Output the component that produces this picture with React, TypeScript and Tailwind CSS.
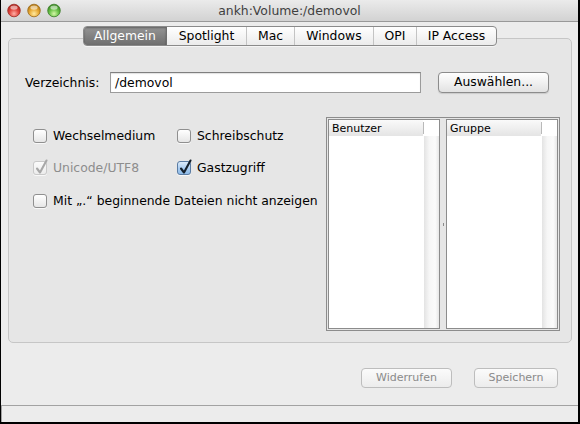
import React from "react";

const tabs = [
  { label: "Allgemein", w: "w-[82px]" },
  { label: "Spotlight", w: "w-[80px]" },
  { label: "Mac", w: "w-[48px]" },
  { label: "Windows", w: "w-[79px]" },
  { label: "OPI", w: "w-[43px]" },
  { label: "IP Access", w: "w-[80px]" },
];

function TrafficLights() {
  return (
    <svg width="66" height="21" viewBox="0 0 66 21">
      <defs>
        <radialGradient id="tl-r" cx="50%" cy="75%" r="65%">
          <stop offset="0%" stopColor="#ffb0a6" />
          <stop offset="55%" stopColor="#e2473f" />
          <stop offset="100%" stopColor="#b4241d" />
        </radialGradient>
        <radialGradient id="tl-y" cx="50%" cy="75%" r="65%">
          <stop offset="0%" stopColor="#ffeaa0" />
          <stop offset="55%" stopColor="#e9ac38" />
          <stop offset="100%" stopColor="#b97c12" />
        </radialGradient>
        <radialGradient id="tl-g" cx="50%" cy="75%" r="65%">
          <stop offset="0%" stopColor="#d6f7a8" />
          <stop offset="55%" stopColor="#6cc34a" />
          <stop offset="100%" stopColor="#3d8d24" />
        </radialGradient>
      </defs>
      <circle cx="13" cy="10.5" r="6.3" fill="url(#tl-r)" stroke="#9b2c25" strokeWidth="0.8" />
      <circle cx="33" cy="10.5" r="6.3" fill="url(#tl-y)" stroke="#9a6a1c" strokeWidth="0.8" />
      <circle cx="53" cy="10.5" r="6.3" fill="url(#tl-g)" stroke="#3b7c29" strokeWidth="0.8" />
      <ellipse cx="13" cy="7.6" rx="3.6" ry="2.2" fill="#fff" opacity="0.55" />
      <ellipse cx="33" cy="7.6" rx="3.6" ry="2.2" fill="#fff" opacity="0.55" />
      <ellipse cx="53" cy="7.6" rx="3.6" ry="2.2" fill="#fff" opacity="0.55" />
    </svg>
  );
}

// kleines Kontrollkästchen im Aqua-Stil
function Check({
  label,
  checked = false,
  disabled = false,
}: {
  label: string;
  checked?: boolean;
  disabled?: boolean;
}) {
  const box = checked && !disabled
    ? "border-[#5a7ca4] bg-[linear-gradient(to_bottom,#dcebfa,#a9ccf0_55%,#8dbbe9)]"
    : disabled
      ? "border-[#c9c9c9] bg-[linear-gradient(to_bottom,#fbfbfb,#ececec)]"
      : "border-[#8f8f8f] bg-[linear-gradient(to_bottom,#ffffff,#e6e6e6)]";
  return (
    <div className="flex h-[16px] items-center">
      <span
        className={`relative h-[14px] w-[14px] shrink-0 rounded-[3px] border shadow-[0_1px_0_rgba(255,255,255,0.7)] ${box}`}
      >
        {checked && (
          <svg
            className="absolute left-[0px] top-[-3px]"
            width="16"
            height="17"
            viewBox="0 0 16 17"
          >
            <path
              d="M3 9.5 L6 13.5 L12.5 1.5"
              fill="none"
              stroke={disabled ? "#a8a8a8" : "#15202c"}
              strokeWidth="2.1"
              strokeLinecap="round"
              strokeLinejoin="round"
            />
          </svg>
        )}
      </span>
      <span className={`ml-[6px] pt-px whitespace-nowrap ${disabled ? "text-[#8d8d8d]" : "text-black"}`}>
        {label}
      </span>
    </div>
  );
}

function ListBox({ title }: { title: string }) {
  return (
    <div className="flex w-[112px] flex-col border border-[#8c8c8c] bg-white">
      <div className="flex h-[16px]">
        <div className="flex flex-1 items-center bg-[linear-gradient(to_bottom,#fafafa,#e4e4e4)] pl-[3px] pt-px text-[11px] leading-none">
          {title}
        </div>
        <div className="my-[2px] w-px bg-[#b9b9b9]" />
        <div className="w-[15px] bg-white" />
      </div>
      <div className="flex flex-1">
        <div className="flex-1 bg-white" />
        <div className="w-[15px] bg-[linear-gradient(to_right,#e3e3e3,#f6f6f6_35%,#fbfbfb_75%,#e7e7e7)]" />
      </div>
    </div>
  );
}

export default function App() {
  return (
    <div className="flex h-[424px] w-[580px] flex-col overflow-hidden border-b-2 border-l border-r-2 border-black bg-[#ececec] font-['DejaVu_Sans',_'Liberation_Sans',_sans-serif] text-[12.4px] text-black">
      {/* Titelleiste */}
      <div className="grid h-[22px] shrink-0 grid-cols-[1fr_auto_1fr] items-center border-b border-[#999999] bg-[linear-gradient(to_bottom,#ebebeb,#d2d2d2)]">
        <div className="flex items-center">
          <TrafficLights />
        </div>
        <div className="pt-px text-[#3f3f3f]">ankh:Volume:/demovol</div>
        <div />
      </div>

      <div className="flex flex-1 flex-col pl-[7px] pr-[6px]">
        {/* Reiter */}
        <div className="relative z-10 mt-[4px] flex h-[20px] justify-center">
          <div className="flex overflow-hidden rounded-[4px] border border-[#8a8a8a] bg-[linear-gradient(to_bottom,#ffffff,#ebebeb)] shadow-[0_1px_0_rgba(255,255,255,0.6)]">
            {tabs.map((t, i) => (
              <div
                key={t.label}
                className={`flex items-center justify-center pt-px leading-none ${t.w} ${
                  i === 0
                    ? "bg-[linear-gradient(to_bottom,#959595,#6f6f6f)] text-white shadow-[inset_0_1px_2px_rgba(0,0,0,0.35)]"
                    : i === 1
                      ? "border-l border-[#6f6f6f]"
                      : "border-l border-[#c4c4c4]"
                }`}
              >
                {t.label}
              </div>
            ))}
          </div>
        </div>

        {/* Inhalt */}
        <div className="-mt-[8px] h-[305px] rounded-[5px] border border-[#c6c6c6] bg-[#e6e6e6] pl-[16px] pr-[11px] pt-[33px]">
          <div className="flex h-[21px] items-center">
            <div className="w-[85px] pt-px">Verzeichnis:</div>
            <div className="flex h-[21px] w-[311px] items-center border border-[#9b9b9b] border-t-[#7f7f7f] bg-white px-[4px] pt-px shadow-[inset_0_1px_1px_rgba(0,0,0,0.12)]">
              /demovol
            </div>
            <button className="ml-[17px] flex h-[21px] w-[111px] items-center justify-center rounded-[4px] border border-[#8c8c8c] bg-[linear-gradient(to_bottom,#ffffff,#f1f1f1_50%,#e2e2e2)] shadow-[0_1px_1px_rgba(0,0,0,0.12)]">
              Auswählen...
            </button>
          </div>

          <div className="mt-[24px] flex">
            <div className="flex-1 pl-[8px] pt-[11px]">
              <div className="grid grid-cols-[144px_auto]">
                <Check label="Wechselmedium" />
                <Check label="Schreibschutz" />
              </div>
              <div className="mt-[16px] grid grid-cols-[144px_auto]">
                <Check label="Unicode/UTF8" checked disabled />
                <Check label="Gastzugriff" checked />
              </div>
              <div className="mt-[17px]">
                <Check label="Mit „.“ beginnende Dateien nicht anzeigen" />
              </div>
            </div>

            <div className="flex h-[214px] w-[234px] border border-[#8c8c8c] p-px">
              <ListBox title="Benutzer" />
              <div className="flex w-[6px] items-center justify-center">
                <div className="h-[3px] w-px bg-[#8a8a8a]" />
              </div>
              <ListBox title="Gruppe" />
            </div>
          </div>
        </div>

        {/* Schaltflächen */}
        <div className="mt-[25px] flex justify-end gap-[22px] pr-[14px]">
          <button className="flex h-[20px] w-[91px] items-center justify-center rounded-[4px] border border-[#bdbdbd] bg-[linear-gradient(to_bottom,#fbfbfb,#ececec)] text-[11px] text-[#8a8a8a]">
            Widerrufen
          </button>
          <button className="flex h-[20px] w-[84px] items-center justify-center rounded-[4px] border border-[#bdbdbd] bg-[linear-gradient(to_bottom,#fbfbfb,#ececec)] text-[11px] text-[#8a8a8a]">
            Speichern
          </button>
        </div>
      </div>

      {/* Statuszeile */}
      <div className="h-[17px] shrink-0 border-l border-t border-[#a2a2a2] bg-[#ececec]" />
    </div>
  );
}
